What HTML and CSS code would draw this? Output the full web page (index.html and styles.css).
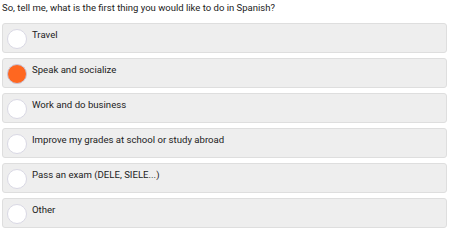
FILE: index.html
```html
<!DOCTYPE html>
<html lang="en">
  <head>
    <meta charset="UTF-8" />
    <meta name="viewport" content="width=device-width, initial-scale=1.0" />
    <title>Quiz</title>
    <link rel="stylesheet" href="styles.css">
  </head>
  <body>
    <section class="sporgsmaal">
      <h1 class="titel">So, tell me, what is the first thing you would like to do in Spanish?</h1>
      <div class="valg">
        <label class="svar"><span class="prik"></span><span class="tekst">Travel</span></label>
        <label class="svar"><span class="prik valgt"></span><span class="tekst">Speak and socialize</span></label>
        <label class="svar"><span class="prik"></span><span class="tekst">Work and do business</span></label>
        <label class="svar"><span class="prik"></span><span class="tekst">Improve my grades at school or study abroad</span></label>
        <label class="svar"><span class="prik"></span><span class="tekst">Pass an exam (DELE, SIELE...)</span></label>
        <label class="svar"><span class="prik"></span><span class="tekst">Other</span></label>
      </div>
    </section>
  </body>
</html>
```

FILE: styles.css
```css
* {
  margin: 0;
  padding: 0;
  box-sizing: border-box;
}

body {
  background-color: #ffffff;
  font-family: Roboto, "Liberation Sans", sans-serif;
  color: #222222;
}

.sporgsmaal {
  padding: 2px 3px 0px 2px;
}

.titel {
  font-size: 9.5px;
  font-weight: 400;
  line-height: 12px;
  height: 21px;
}

.valg {
  display: flex;
  flex-direction: column;
  gap: 5px;
}

.svar {
  display: flex;
  align-items: flex-start;
  gap: 5px;
  height: 30px;
  padding: 4px;
  background-color: #eeeeee;
  border: 1px solid #dedede;
  border-radius: 3px;
  cursor: pointer;
}

.prik {
  width: 20px;
  height: 20px;
  margin-top: 1px;
  border-radius: 50%;
  background-color: #ffffff;
  border: 1px solid #d9d8e4;
  flex-shrink: 0;
}

.prik.valgt {
  background-color: #ff6720;
  border-color: #c9c4d8;
}

.tekst {
  font-size: 9.6px;
  line-height: 12px;
  padding-top: 1px;
}
```
